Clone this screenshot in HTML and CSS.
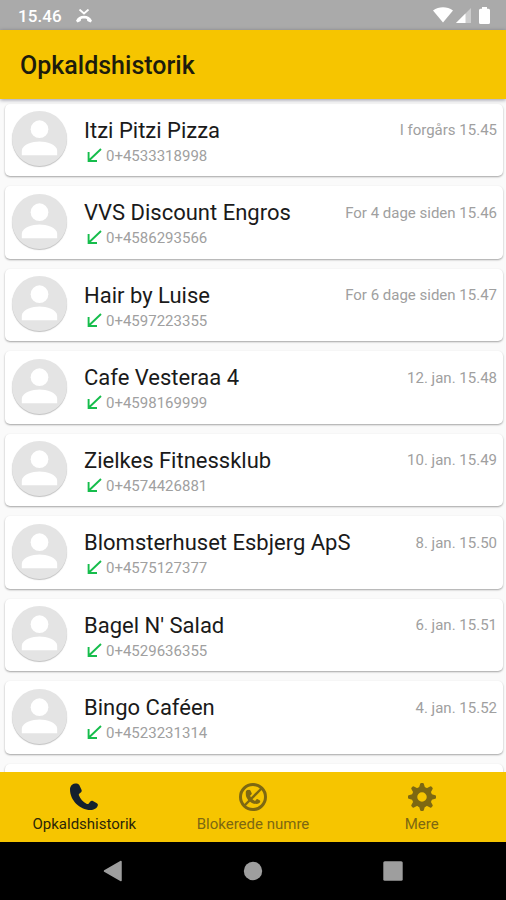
FILE: index.html
```html
<!DOCTYPE html>
<html lang="da">
<head>
    <meta charset="UTF-8">
    <meta name="viewport" content="width=device-width, initial-scale=1.0">
    <title>Opkaldshistorik</title>
    <link rel="stylesheet" href="styles.css">
</head>
<body>
    <!-- Shared icons -->
    <svg class="sprite" aria-hidden="true">
        <symbol id="person" viewBox="0 0 56 56">
            <circle cx="28" cy="18.5" r="9" />
            <path d="M10 45v-4.500c0-6.500 11-9.500 18-9.500s18 3 18 9.500V45z" />
        </symbol>
        <symbol id="incoming" viewBox="0 0 15 15">
            <path d="M14 1L2.200 12.300M1.600 4v9h8.400" />
        </symbol>
        <symbol id="handset" viewBox="0 0 28 28">
            <path d="M5 .5C2.300.8 0 3.200 0 6.400 0 17 9.500 26.800 20.500 27c3.300 0 6.500-1.600 7.300-4.500.3-1-.1-1.700-.9-2.200l-4-2.300c-.9-.5-1.900-.3-2.600.5l-1.500 1.900c-.5.600-1.200.8-1.900.5-4-1.800-6.700-5-8-8.600-.3-.7 0-1.400.6-1.800l1.300-1c.8-.6 1.100-1.400.8-2.400L9.400 2.200C8.800.8 7 .3 5 .5z" />
        </symbol>
    </svg>

    <div class="status-bar">
        <span class="clock">15.46</span>
        <svg class="missed" viewBox="0 0 16 14">
            <path d="M3.500.5L8 4.500 12.500.5" fill="none" stroke="#fff" stroke-width="1.800" />
            <path d="M0 11.700C1.500 8.700 4.300 6.800 8 6.800s6.500 1.900 8 4.900l-1.500 1.700-3.200-1.300-.4-2.200c-1.900-.6-3.900-.6-5.800 0l-.4 2.200-3.200 1.300z" fill="#fff" />
        </svg>
        <div class="status-icons">
            <svg width="20" height="16" viewBox="0 0 20 16"><path d="M0 3.500C6-.8 14-.8 20 3.500L10 15.500z" fill="#fff" /></svg>
            <svg width="15" height="15" viewBox="0 0 15 15"><path d="M15 0v15H0z" fill="#fff" opacity=".4" /><path d="M9.500 5.500V15H0z" fill="#fff" /></svg>
            <svg class="battery" width="11" height="17" viewBox="0 0 11 17"><path d="M3 0h5v1.800h1.500Q11 1.800 11 3.300v12.200Q11 17 9.500 17h-8Q0 17 0 15.500V3.300Q0 1.800 1.500 1.800H3z" fill="#fff" /></svg>
        </div>
    </div>

    <header class="app-bar">
        <h1>Opkaldshistorik</h1>
    </header>

    <main class="call-list">
        <div class="card">
            <div class="avatar"><svg><use href="#person" /></svg></div>
            <div class="caller">
                <div class="name">Itzi Pitzi Pizza</div>
                <div class="number"><svg><use href="#incoming" /></svg>0+4533318998</div>
            </div>
            <div class="time">I forgårs 15.45</div>
        </div>
        <div class="card">
            <div class="avatar"><svg><use href="#person" /></svg></div>
            <div class="caller">
                <div class="name">VVS Discount Engros</div>
                <div class="number"><svg><use href="#incoming" /></svg>0+4586293566</div>
            </div>
            <div class="time">For 4 dage siden 15.46</div>
        </div>
        <div class="card">
            <div class="avatar"><svg><use href="#person" /></svg></div>
            <div class="caller">
                <div class="name">Hair by Luise</div>
                <div class="number"><svg><use href="#incoming" /></svg>0+4597223355</div>
            </div>
            <div class="time">For 6 dage siden 15.47</div>
        </div>
        <div class="card">
            <div class="avatar"><svg><use href="#person" /></svg></div>
            <div class="caller">
                <div class="name">Cafe Vesteraa 4</div>
                <div class="number"><svg><use href="#incoming" /></svg>0+4598169999</div>
            </div>
            <div class="time">12. jan. 15.48</div>
        </div>
        <div class="card">
            <div class="avatar"><svg><use href="#person" /></svg></div>
            <div class="caller">
                <div class="name">Zielkes Fitnessklub</div>
                <div class="number"><svg><use href="#incoming" /></svg>0+4574426881</div>
            </div>
            <div class="time">10. jan. 15.49</div>
        </div>
        <div class="card">
            <div class="avatar"><svg><use href="#person" /></svg></div>
            <div class="caller">
                <div class="name">Blomsterhuset Esbjerg ApS</div>
                <div class="number"><svg><use href="#incoming" /></svg>0+4575127377</div>
            </div>
            <div class="time">8. jan. 15.50</div>
        </div>
        <div class="card">
            <div class="avatar"><svg><use href="#person" /></svg></div>
            <div class="caller">
                <div class="name">Bagel N' Salad</div>
                <div class="number"><svg><use href="#incoming" /></svg>0+4529636355</div>
            </div>
            <div class="time">6. jan. 15.51</div>
        </div>
        <div class="card">
            <div class="avatar"><svg><use href="#person" /></svg></div>
            <div class="caller">
                <div class="name">Bingo Caféen</div>
                <div class="number"><svg><use href="#incoming" /></svg>0+4523231314</div>
            </div>
            <div class="time">4. jan. 15.52</div>
        </div>
        <div class="card">
            <div class="avatar"></div>
        </div>
    </main>

    <nav class="tabs">
        <a class="tab active">
            <svg viewBox="0 0 28 28"><use href="#handset" /></svg>
            <span>Opkaldshistorik</span>
        </a>
        <a class="tab">
            <svg viewBox="0 0 28 28">
                <circle cx="14" cy="14" r="12.500" fill="none" stroke="currentColor" stroke-width="3" />
                <use href="#handset" x="6.500" y="6.500" width="15" height="15" />
                <path d="M22.500 5.500l-17 17" stroke="currentColor" stroke-width="2.400" />
            </svg>
            <span>Blokerede numre</span>
        </a>
        <a class="tab">
            <svg viewBox="0 0 28 28">
                <circle cx="14" cy="14" r="7.500" fill="none" stroke="currentColor" stroke-width="5.500" />
                <g id="teeth">
                    <path id="tooth" d="M10.900 5l1.300-4.200q.2-.8 1-.8h1.600q.8 0 1 .8L17.100 5z" />
                    <use href="#tooth" transform="rotate(45 14 14)" />
                    <use href="#tooth" transform="rotate(90 14 14)" />
                    <use href="#tooth" transform="rotate(135 14 14)" />
                </g>
                <use href="#teeth" transform="rotate(180 14 14)" />
            </svg>
            <span>Mere</span>
        </a>
    </nav>

    <div class="nav-bar">
        <svg viewBox="0 0 20 22"><path d="M18 1.500v19L1.500 11z" stroke="#9e9e9e" stroke-width="1.500" stroke-linejoin="round" /></svg>
        <svg viewBox="0 0 20 22"><circle cx="10" cy="11" r="9.200" /></svg>
        <svg viewBox="0 0 20 22"><rect x=".3" y="1.300" width="19.400" height="19.400" rx="1.500" /></svg>
    </div>
</body>
</html>
```
FILE: styles.css
```css
* {
    box-sizing: border-box;
}
body {
    margin: 0;
    height: 900px;
    display: flex;
    flex-direction: column;
    overflow: hidden;
    font-family: Roboto, sans-serif;
    background-color: #fafafa;
}
svg {
    display: block;
    flex: none;
}
.sprite {
    position: absolute;
    width: 0;
    height: 0;
}
.status-bar {
    flex: none;
    height: 30px;
    padding: 2px 16px 0 18px;
    display: flex;
    align-items: center;
    background-color: #aaa;
    color: #fff;
}
.clock {
    width: 58px;
    font-size: 17px;
    font-weight: 500;
    letter-spacing: 0.1px;
}
.missed {
    width: 16px;
    height: 14px;
}
.status-icons {
    margin-left: auto;
    margin-bottom: 2px;
    display: flex;
    align-items: center;
    gap: 3px;
}
.battery {
    margin-left: 5px;
}
.app-bar {
    flex: none;
    height: 69px;
    padding: 2px 20px 0;
    display: flex;
    align-items: center;
    background-color: #f6c500;
    box-shadow: 0 1px 4px rgba(0, 0, 40, 0.4);
    z-index: 1;
}
h1 {
    margin: 0;
    font-size: 25px;
    font-weight: 500;
    color: #1d1c0c;
}
.call-list {
    flex: 1;
    min-height: 0;
    overflow: hidden;
    padding: 4.6px 3px 0 5px;
    display: flex;
    flex-direction: column;
    gap: 10px;
}
.card {
    flex: none;
    height: 72.55px;
    padding: 0 6px 0 7px;
    display: flex;
    align-items: flex-start;
    background-color: #fff;
    border-radius: 5px;
    box-shadow: 0 1px 2px rgba(0, 0, 0, 0.35);
}
.avatar {
    width: 55px;
    height: 55px;
    margin-top: 7.6px;
    border-radius: 50%;
    background-color: #e4e4e4;
    box-shadow: 0 1px 1px rgba(0, 0, 0, 0.25);
}
.avatar svg {
    width: 55px;
    height: 55px;
    fill: #fff;
}
.caller {
    flex: 1;
    margin-left: 17px;
    padding-top: 14px;
}
.name {
    font-size: 22px;
    line-height: 26px;
    color: #1a1a1a;
}
.number {
    display: flex;
    align-items: center;
    gap: 4px;
    padding-left: 3px;
    font-size: 15px;
    line-height: 24px;
    color: #a0a0a0;
}
.number svg {
    width: 15px;
    height: 15px;
    margin-bottom: 1px;
    fill: none;
    stroke: #16bd4c;
    stroke-width: 1.9;
}
.time {
    padding-top: 17.4px;
    font-size: 15px;
    line-height: 18px;
    color: #a0a0a0;
}
.tabs {
    flex: none;
    height: 70px;
    display: flex;
    background-color: #f6c500;
}
.tab {
    flex: 1;
    padding-top: 11px;
    display: flex;
    flex-direction: column;
    align-items: center;
    gap: 4px;
    font-size: 15px;
    line-height: 18px;
    color: #7d6812;
}
.tab svg {
    width: 28px;
    height: 28px;
    fill: currentColor;
}
.tab.active {
    color: #2b2608;
}
.tab.active svg {
    color: #14212e;
}
.nav-bar {
    flex: none;
    height: 58px;
    display: flex;
    justify-content: center;
    align-items: center;
    gap: 120px;
    background-color: #000;
}
.nav-bar svg {
    width: 20px;
    height: 22px;
    fill: #9e9e9e;
}
```
